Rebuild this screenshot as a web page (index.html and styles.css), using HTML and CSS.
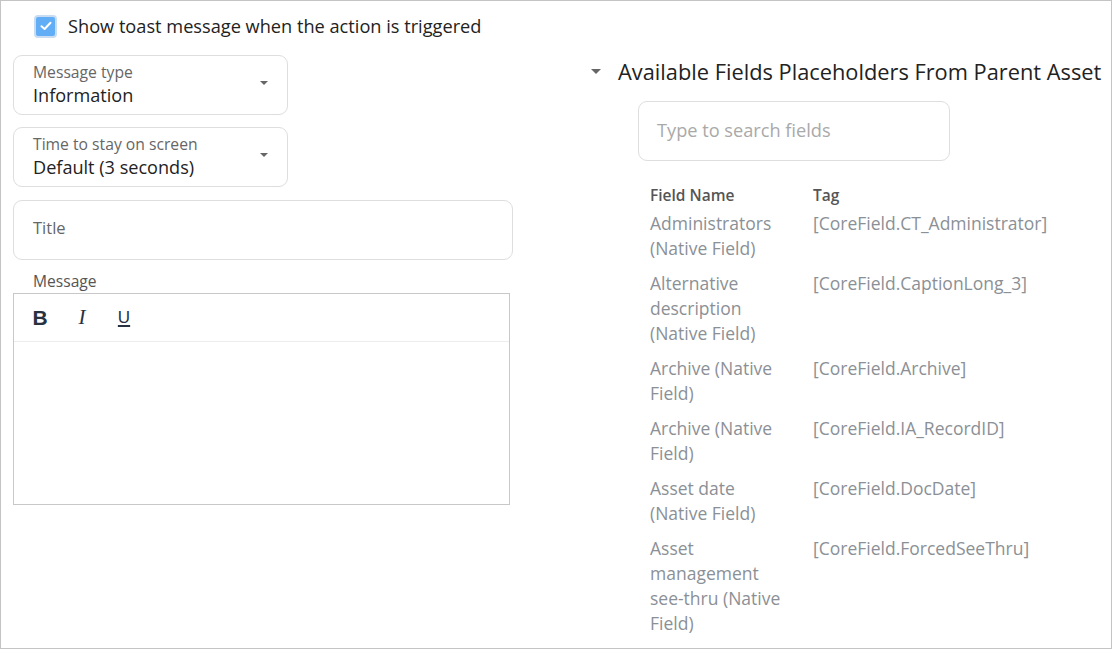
FILE: index.html
```html
<!DOCTYPE html>
<html>
<head>
<title>Toast message action</title>
<link rel="stylesheet" href="styles.css">
</head>
<body>
<div class="frame">
  <div class="left">
    <label class="check-row">
      <span class="checkbox">
        <svg width="12" height="10" viewBox="0 0 12 10"><path d="M1.5 5.2 L4.6 8 L10.5 1.8" fill="none" stroke="#fff" stroke-width="2" stroke-linecap="round" stroke-linejoin="round"/></svg>
      </span>
      <span>Show toast message when the action is triggered</span>
    </label>

    <div class="select">
      <div class="select-text">
        <span class="select-label">Message type</span>
        <span class="select-value">Information</span>
      </div>
      <span class="caret"></span>
    </div>

    <div class="select">
      <div class="select-text">
        <span class="select-label">Time to stay on screen</span>
        <span class="select-value">Default (3 seconds)</span>
      </div>
      <span class="caret"></span>
    </div>

    <div class="text-input">Title</div>

    <div class="editor-label">Message</div>
    <div class="editor">
      <div class="toolbar">
        <span class="tool tool-b">B</span>
        <span class="tool tool-i">I</span>
        <span class="tool tool-u">U</span>
      </div>
      <div class="editor-body"></div>
    </div>
  </div>

  <div class="right">
    <div class="section-head">
      <span class="caret"></span>
      <h2>Available Fields Placeholders From Parent Asset</h2>
    </div>
    <div class="search">Type to search fields</div>

    <div class="fields">
      <div class="field-row field-head">
        <span>Field Name</span>
        <span>Tag</span>
      </div>
      <div class="field-row">
        <span>Administrators (Native Field)</span>
        <span>[CoreField.CT_Administrator]</span>
      </div>
      <div class="field-row">
        <span>Alternative description (Native Field)</span>
        <span>[CoreField.CaptionLong_3]</span>
      </div>
      <div class="field-row">
        <span>Archive (Native Field)</span>
        <span>[CoreField.Archive]</span>
      </div>
      <div class="field-row">
        <span>Archive (Native Field)</span>
        <span>[CoreField.IA_RecordID]</span>
      </div>
      <div class="field-row">
        <span>Asset date (Native Field)</span>
        <span>[CoreField.DocDate]</span>
      </div>
      <div class="field-row">
        <span>Asset management see-thru (Native Field)</span>
        <span>[CoreField.ForcedSeeThru]</span>
      </div>
    </div>
  </div>
</div>
</body>
</html>
```

FILE: styles.css
```css
body {
  margin: 0;
  padding: 0;
  font-family: "Open Sans", "Noto Sans", sans-serif;
  color: #222;
  background-color: white;
}

.frame {
  box-sizing: border-box;
  height: 649px;
  border: 1px solid #c4c4c4;
  display: flex;
  overflow: hidden;
}

.left {
  width: 500px;
  padding: 13px 0 0 12px;
}

.check-row {
  display: flex;
  align-items: center;
  gap: 11px;
  height: 24px;
  padding-left: 21px;
  font-size: 18.2px;
}

.checkbox {
  box-sizing: border-box;
  width: 23px;
  height: 23px;
  border: 2px solid #c9ddf2;
  border-radius: 4px;
  background-color: #62aef6;
  display: flex;
  align-items: center;
  justify-content: center;
}

.select {
  box-sizing: border-box;
  width: 275px;
  height: 60px;
  margin-top: 17px;
  padding: 5px 19px 6px;
  border: 1px solid #dedede;
  border-radius: 9px;
  display: flex;
  align-items: center;
  justify-content: space-between;
}

.select + .select {
  margin-top: 12px;
}

.select-text {
  display: flex;
  flex-direction: column;
}

.select-label {
  font-size: 15.7px;
  line-height: 21px;
  color: #666;
}

.select-value {
  font-size: 18.1px;
  line-height: 25px;
  color: #222;
}

.caret {
  width: 0;
  height: 0;
  border-left: 4.5px solid transparent;
  border-right: 4.5px solid transparent;
  border-top: 4.5px solid #666;
}

.select .caret {
  margin-bottom: 4px;
}

.text-input {
  box-sizing: border-box;
  width: 500px;
  height: 60px;
  margin-top: 13px;
  padding: 0 19px 5px;
  border: 1px solid #dedede;
  border-radius: 9px;
  display: flex;
  align-items: center;
  font-size: 16.5px;
  color: #666;
}

.editor-label {
  margin-top: 10px;
  padding-left: 20px;
  font-size: 15.6px;
  line-height: 22px;
  color: #555;
}

.editor {
  box-sizing: border-box;
  width: 497px;
  height: 212px;
  margin-top: 1px;
  border: 1px solid #c8c8c8;
}

.toolbar {
  height: 47px;
  border-bottom: 1px solid #ededed;
  display: flex;
  align-items: center;
  padding-left: 17px;
  gap: 24px;
}

.tool {
  width: 18px;
  text-align: center;
  color: #283140;
  font-size: 21px;
}

.tool-b {
  font-family: "Liberation Sans", sans-serif;
  font-weight: bold;
}

.tool-i {
  font-family: "Liberation Serif", serif;
  font-style: italic;
}

.tool-u {
  font-family: "Liberation Sans", sans-serif;
  font-size: 17px;
  text-decoration: underline;
  text-decoration-thickness: 2px;
  text-underline-offset: 2px;
}

.right {
  padding: 55px 0 0 78px;
}

.section-head {
  display: flex;
  align-items: center;
  gap: 17px;
  height: 30px;
}

.section-head .caret {
  border-left-width: 5px;
  border-right-width: 5px;
  border-top-width: 5px;
}

.section-head h2 {
  margin: 0;
  font-size: 21.8px;
  font-weight: normal;
  color: #222;
  white-space: nowrap;
}

.search {
  box-sizing: border-box;
  width: 312px;
  height: 60px;
  margin: 15px 0 0 47px;
  padding: 0 18px 2px;
  border: 1px solid #dedede;
  border-radius: 9px;
  display: flex;
  align-items: center;
  font-size: 18.2px;
  color: #a9a9a9;
}

.fields {
  margin: 23px 0 0 59px;
}

.field-row {
  display: grid;
  grid-template-columns: 140px auto;
  column-gap: 23px;
  margin-bottom: 10px;
  font-size: 17.5px;
  line-height: 25px;
  color: #8b9096;
}

.field-row.field-head {
  margin-bottom: 5px;
  line-height: 22px;
  font-size: 15.5px;
  font-weight: 600;
  color: #555;
}
```
